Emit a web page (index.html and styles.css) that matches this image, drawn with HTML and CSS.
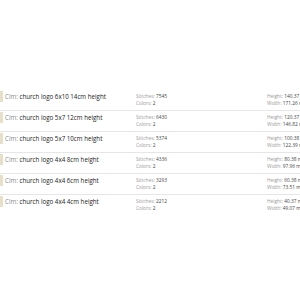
FILE: index.html
```html
<!DOCTYPE html>
<html>
<head>
<meta charset="utf-8">
<link rel="stylesheet" href="styles.css">
</head>
<body>
<div class="list">
  <div class="row">
    <div class="thumb"></div>
    <div class="title"><span class="lbl">Cím:</span> church logo 6x10 14cm height</div>
    <div class="col stats"><div><span class="lbl">Stitches:</span> 7545</div><div><span class="lbl">Colors:</span> 2</div></div>
    <div class="col dims"><div><span class="lbl">Height:</span> 140.37 mm</div><div><span class="lbl">Width:</span> 171.26 mm</div></div>
  </div>
  <div class="row">
    <div class="thumb"></div>
    <div class="title"><span class="lbl">Cím:</span> church logo 5x7 12cm height</div>
    <div class="col stats"><div><span class="lbl">Stitches:</span> 6430</div><div><span class="lbl">Colors:</span> 2</div></div>
    <div class="col dims"><div><span class="lbl">Height:</span> 120.37 mm</div><div><span class="lbl">Width:</span> 146.82 mm</div></div>
  </div>
  <div class="row">
    <div class="thumb"></div>
    <div class="title"><span class="lbl">Cím:</span> church logo 5x7 10cm height</div>
    <div class="col stats"><div><span class="lbl">Stitches:</span> 5374</div><div><span class="lbl">Colors:</span> 2</div></div>
    <div class="col dims"><div><span class="lbl">Height:</span> 100.38 mm</div><div><span class="lbl">Width:</span> 122.39 mm</div></div>
  </div>
  <div class="row">
    <div class="thumb"></div>
    <div class="title"><span class="lbl">Cím:</span> church logo 4x4 8cm height</div>
    <div class="col stats"><div><span class="lbl">Stitches:</span> 4336</div><div><span class="lbl">Colors:</span> 2</div></div>
    <div class="col dims"><div><span class="lbl">Height:</span> 80.38 mm</div><div><span class="lbl">Width:</span> 97.96 mm</div></div>
  </div>
  <div class="row">
    <div class="thumb"></div>
    <div class="title"><span class="lbl">Cím:</span> church logo 4x4 6cm height</div>
    <div class="col stats"><div><span class="lbl">Stitches:</span> 3293</div><div><span class="lbl">Colors:</span> 2</div></div>
    <div class="col dims"><div><span class="lbl">Height:</span> 60.38 mm</div><div><span class="lbl">Width:</span> 73.51 mm</div></div>
  </div>
  <div class="row last">
    <div class="thumb"></div>
    <div class="title"><span class="lbl">Cím:</span> church logo 4x4 4cm height</div>
    <div class="col stats"><div><span class="lbl">Stitches:</span> 2212</div><div><span class="lbl">Colors:</span> 2</div></div>
    <div class="col dims"><div><span class="lbl">Height:</span> 40.37 mm</div><div><span class="lbl">Width:</span> 49.07 mm</div></div>
  </div>
</div>
</body>
</html>
```

FILE: styles.css
```css
html, body {
  margin: 0;
  padding: 0;
  background: #fff;
  width: 300px;
  height: 300px;
  overflow: hidden;
}
.list {
  padding-top: 90px;
  font-family: "Open Sans", "Noto Sans", sans-serif;
}
.row {
  display: flex;
  align-items: flex-start;
  height: 20px;
  border-bottom: 1px solid #e6e6e6;
  white-space: nowrap;
}
.row.last {
  border-bottom: none;
}
.thumb {
  width: 3px;
  height: 11px;
  margin-top: 1px;
  background: #e6dfc9;
  flex: none;
}
.title {
  width: 131px;
  margin-left: 2px;
  font-size: 6.2px;
  line-height: 13px;
  color: #222;
  flex: none;
}
.title .lbl {
  color: #8a8a8a;
}
.col {
  font-size: 4.8px;
  line-height: 7px;
  color: #444;
  flex: none;
  padding-top: 3px;
}
.col .lbl {
  color: #9a9a9a;
}
.stats {
  width: 131px;
}
.dims {
  width: 40px;
}
```
